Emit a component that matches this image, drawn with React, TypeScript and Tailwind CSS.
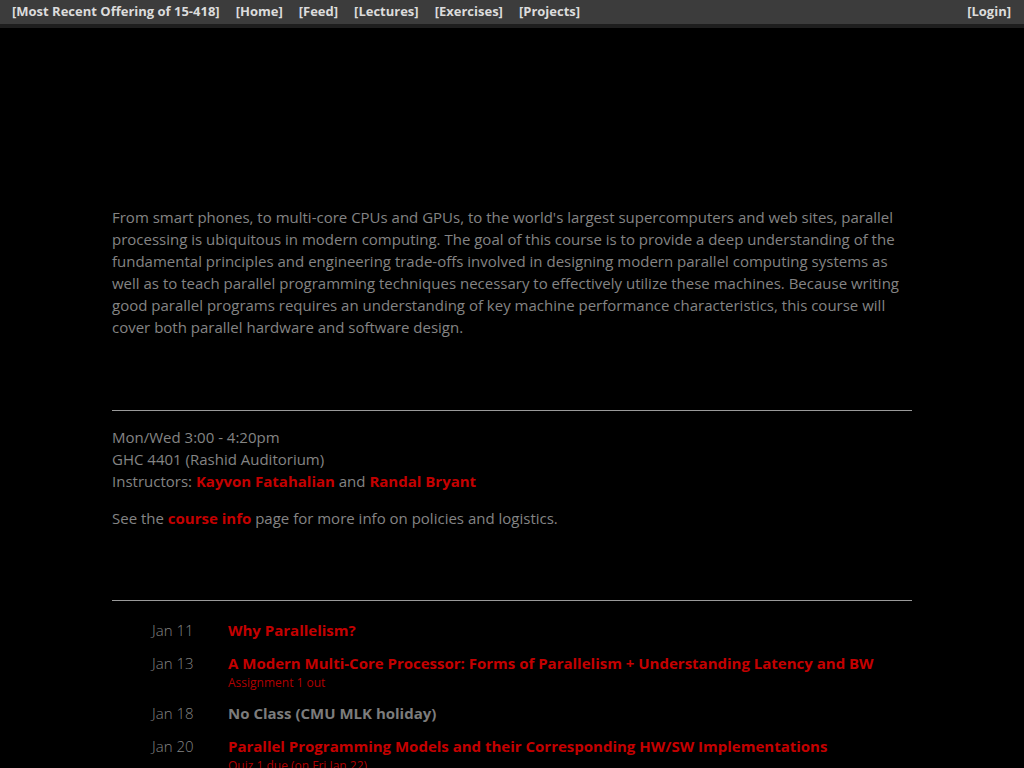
const navItems = [
  "Most Recent Offering of 15-418",
  "Home",
  "Feed",
  "Lectures",
  "Exercises",
  "Projects",
];

type Lecture = { date: string; title: string; note?: string; link: boolean };

const lectures: Lecture[] = [
  { date: "Jan 11", title: "Why Parallelism?", link: true },
  {
    date: "Jan 13",
    title:
      "A Modern Multi-Core Processor: Forms of Parallelism + Understanding Latency and BW",
    note: "Assignment 1 out",
    link: true,
  },
  { date: "Jan 18", title: "No Class (CMU MLK holiday)", link: false },
  {
    date: "Jan 20",
    title: "Parallel Programming Models and their Corresponding HW/SW Implementations",
    note: "Quiz 1 due (on Fri Jan 22)",
    link: true,
  },
];

function Topbar() {
  return (
    <div className="flex justify-between h-[28px] bg-[#3c3c3c] border-b-4 border-[#1e1e1e] px-3 text-[13px] font-bold text-[#dcdcdc] leading-[23px]">
      <div className="flex gap-[16px]">
        {navItems.map((n) => (
          <span key={n}>[{n}]</span>
        ))}
      </div>
      <span className="pr-[1px]">[Login]</span>
    </div>
  );
}

export default function App() {
  return (
    <div
      className="min-h-[768px] bg-black text-[#848484]"
      style={{ fontFamily: '"Open Sans", "Noto Sans", sans-serif' }}
    >
      <Topbar />
      <div className="w-[800px] mx-auto pt-[178px] text-[15px] leading-[22px]">
        <p>
          From smart phones, to multi-core CPUs and GPUs, to the world's largest
          supercomputers and web sites, parallel processing is ubiquitous in modern
          computing. The goal of this course is to provide a deep understanding of the
          fundamental principles and engineering trade-offs involved in designing modern
          parallel computing systems as well as to teach parallel programming techniques
          necessary to effectively utilize these machines. Because writing good parallel
          programs requires an understanding of key machine performance characteristics,
          this course will cover both parallel hardware and software design.
        </p>

        <div className="mt-[72px] border-t border-[#9a9a9a]" />

        <div className="pt-[15px]">
          <div>Mon/Wed 3:00 - 4:20pm</div>
          <div>GHC 4401 (Rashid Auditorium)</div>
          <div>
            Instructors: <a className="font-bold text-[#c40000]">Kayvon Fatahalian</a>{" "}
            and <a className="font-bold text-[#c40000]">Randal Bryant</a>
          </div>
          <p className="mt-[15px]">
            See the <a className="font-bold text-[#c40000]">course info</a> page for more
            info on policies and logistics.
          </p>
        </div>

        <div className="mt-[71px] border-t border-[#9a9a9a]" />

        <div className="pt-[18px] flex flex-col gap-[11px]">
          {lectures.map((l) => (
            <div key={l.date} className="flex">
              <div className="w-[116px] pl-[40px] shrink-0 font-light text-[#848484]">
                {l.date}
              </div>
              <div>
                <div
                  className={
                    l.link ? "font-bold text-[#c40000]" : "font-bold text-[#7c7c7c]"
                  }
                >
                  {l.title}
                </div>
                {l.note && (
                  <div className="text-[12px] leading-[17px] text-[#b00000]">
                    {l.note}
                  </div>
                )}
              </div>
            </div>
          ))}
        </div>
      </div>
    </div>
  );
}
